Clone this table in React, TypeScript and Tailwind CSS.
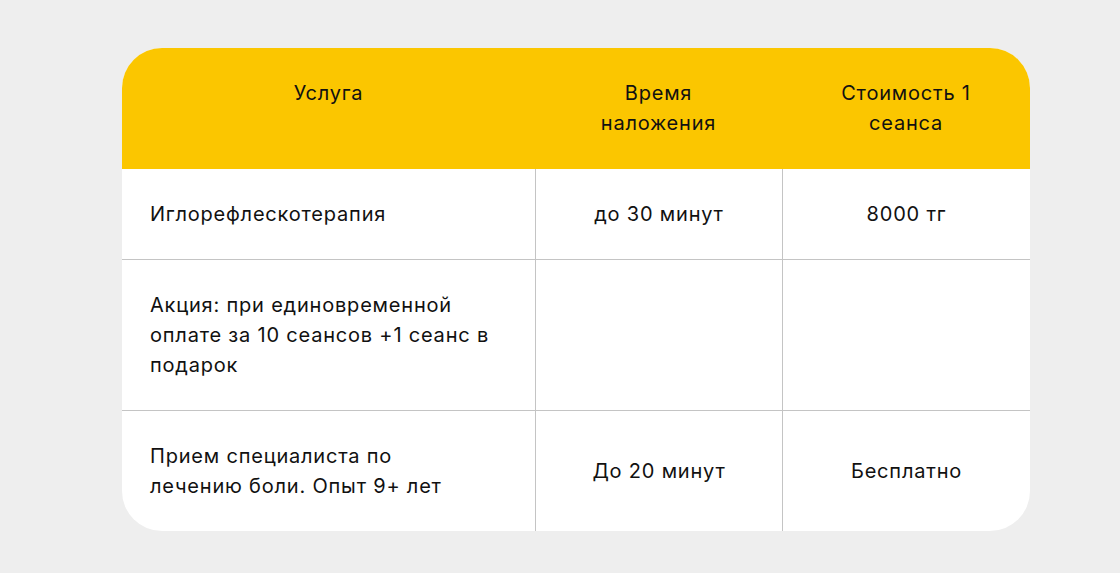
export default function App() {
  const font = { fontFamily: "Inter, 'Noto Sans', sans-serif" };
  return (
    <div className="min-h-[573px] w-full bg-[#eeeeee] pt-12 pl-[122px]" style={font}>
      <div className="w-[908px] overflow-hidden rounded-[40px] bg-white text-[20px] leading-[30px] tracking-[0.04em] text-[#111111]">
        {/* header */}
        <div className="grid grid-cols-[413px_247px_248px] bg-[#fbc600]">
          <div className="pt-[30px] pb-[31px] text-center">Услуга</div>
          <div className="pt-[30px] pb-[31px] text-center">
            Время
            <br />
            наложения
          </div>
          <div className="pt-[30px] pb-[31px] text-center">
            Стоимость 1
            <br />
            сеанса
          </div>
        </div>

        {/* row 1 */}
        <div className="grid grid-cols-[413px_247px_248px]">
          <div className="flex items-center py-[30px] px-[28px]">Иглорефлескотерапия</div>
          <div className="flex items-center justify-center border-l border-[#c4c4c4] py-[30px]">до 30 минут</div>
          <div className="flex items-center justify-center border-l border-[#c4c4c4] py-[30px]">8000 тг</div>
        </div>

        {/* row 2 */}
        <div className="grid grid-cols-[413px_247px_248px] border-t border-[#c4c4c4]">
          <div className="py-[30px] px-[28px]">
            Акция: при единовременной
            <br />
            оплате за 10 сеансов +1 сеанс в
            <br />
            подарок
          </div>
          <div className="border-l border-[#c4c4c4]"></div>
          <div className="border-l border-[#c4c4c4]"></div>
        </div>

        {/* row 3 */}
        <div className="grid grid-cols-[413px_247px_248px] border-t border-[#c4c4c4]">
          <div className="py-[30px] px-[28px]">
            Прием специалиста по
            <br />
            лечению боли. Опыт 9+ лет
          </div>
          <div className="flex items-center justify-center border-l border-[#c4c4c4]">До 20 минут</div>
          <div className="flex items-center justify-center border-l border-[#c4c4c4]">Бесплатно</div>
        </div>
      </div>
    </div>
  );
}
